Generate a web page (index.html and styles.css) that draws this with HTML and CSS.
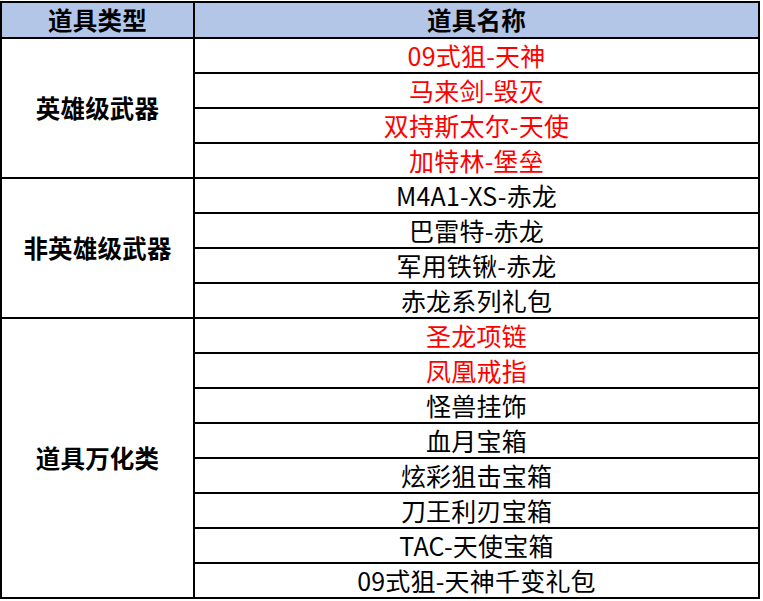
FILE: index.html
```html
<!DOCTYPE html>
<html lang="zh">
<head>
<meta charset="utf-8">
<title>道具</title>
<link rel="stylesheet" href="styles.css">
</head>
<body>
<div class="sheet">
  <div class="cell head">道具类型</div>
  <div class="cell head">道具名称</div>

  <div class="cell group g4">英雄级武器</div>
  <div class="cell red">09式狙-天神</div>
  <div class="cell red">马来剑-毁灭</div>
  <div class="cell red">双持斯太尔-天使</div>
  <div class="cell red">加特林-堡垒</div>

  <div class="cell group g4">非英雄级武器</div>
  <div class="cell">M4A1-XS-赤龙</div>
  <div class="cell">巴雷特-赤龙</div>
  <div class="cell">军用铁锹-赤龙</div>
  <div class="cell">赤龙系列礼包</div>

  <div class="cell group g8">道具万化类</div>
  <div class="cell red">圣龙项链</div>
  <div class="cell red">凤凰戒指</div>
  <div class="cell">怪兽挂饰</div>
  <div class="cell">血月宝箱</div>
  <div class="cell">炫彩狙击宝箱</div>
  <div class="cell">刀王利刃宝箱</div>
  <div class="cell">TAC-天使宝箱</div>
  <div class="cell">09式狙-天神千变礼包</div>
</div>
</body>
</html>
```
FILE: styles.css
```css
html, body {
  margin: 0;
  padding: 0;
  background: #ffffff;
}
body {
  padding-top: 1px;
  font-family: "Noto Sans CJK SC", "Noto Sans", sans-serif;
  color: #000;
}
.sheet {
  width: 760px;
  box-sizing: border-box;
  display: grid;
  grid-template-columns: 193px 565px;
  grid-template-rows: 36px repeat(16, 35px);
  border-left: 2px solid #000;
  border-top: 2px solid #000;
}
.cell {
  box-sizing: border-box;
  border-right: 2px solid #000;
  border-bottom: 2px solid #000;
  display: flex;
  align-items: center;
  justify-content: center;
  font-size: 25px;
  line-height: 1;
  white-space: nowrap;
  letter-spacing: 0.2px;
}
.head {
  background: #b4c6e7;
  font-weight: bold;
  font-size: 24.5px;
}
.group {
  font-weight: bold;
  font-size: 24.5px;
  grid-column: 1;
}
.g4 { grid-row: span 4; }
.g8 { grid-row: span 8; }
.red { color: #ff0000; }
```
